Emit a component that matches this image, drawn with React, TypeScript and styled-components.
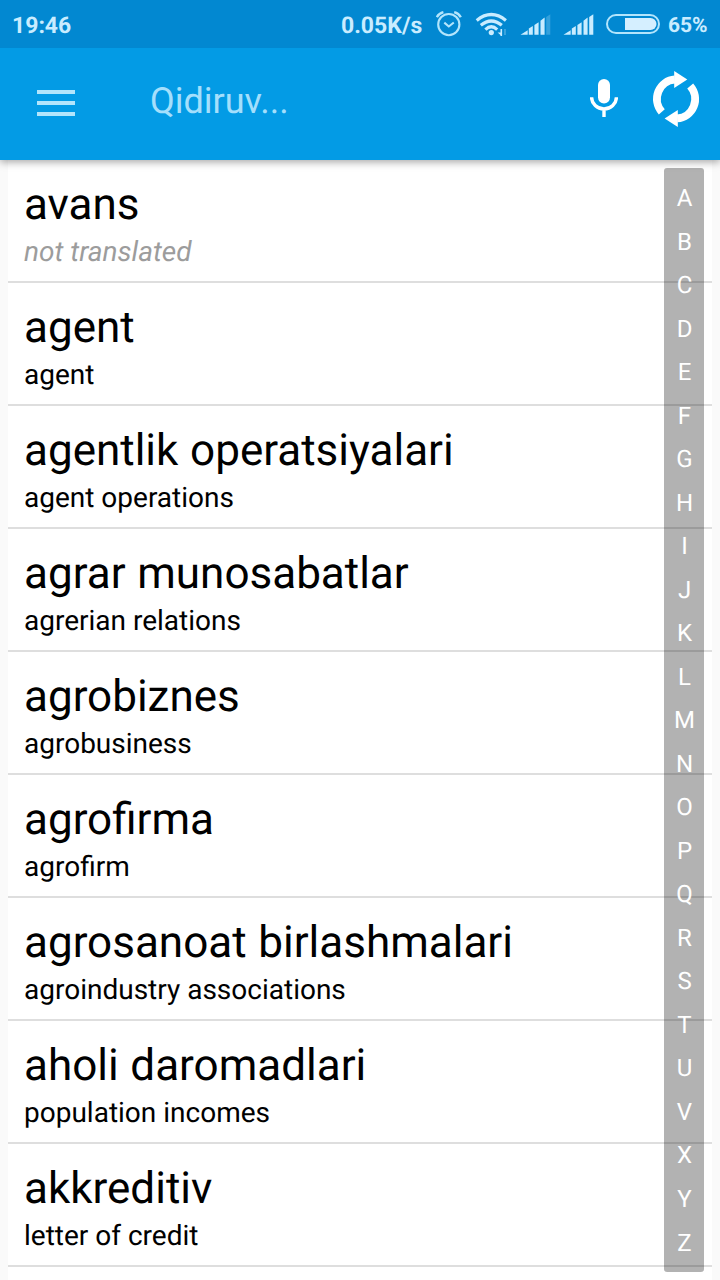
import React from "react";
import styled, { createGlobalStyle } from "styled-components";

const GlobalStyle = createGlobalStyle`
  * { box-sizing: border-box; }
  html, body { margin: 0; padding: 0; }
  body { background: #fafafa; font-family: Roboto, "Liberation Sans", sans-serif; overflow: hidden; text-rendering: geometricPrecision; }
`;

const Screen = styled.div`
  display: flex;
  flex-direction: column;
  width: 720px;
  height: 1280px;
  overflow: hidden;
`;

const StatusBar = styled.header`
  position: relative;
  z-index: 2;
  display: flex;
  align-items: center;
  height: 48px;
  flex: none;
  padding: 4px 12px 0 12px;
  background: #0288d1;
  color: #c9ecff;
`;

const StatusText = styled.span<{ $size?: number; $width?: number }>`
  font-size: ${(p) => p.$size ?? 23}px;
  line-height: 28px;
  font-weight: 700;
  white-space: nowrap;
  width: ${(p) => (p.$width ? `${p.$width}px` : "auto")};
`;

const StatusIcons = styled.div`
  display: flex;
  align-items: center;
  margin-left: auto;
`;

const StatusIcon = styled.svg<{ $gap: number }>`
  display: block;
  flex: none;
  margin: -4px ${(p) => p.$gap}px 0 0;
`;

const AppBar = styled.div`
  position: relative;
  z-index: 1;
  display: flex;
  align-items: center;
  height: 112px;
  flex: none;
  padding: 0 20px 0 37px;
  background: #039be5;
  box-shadow: 0 2px 8px rgba(0, 0, 0, 0.36);
`;

const MenuButton = styled.button`
  display: flex;
  flex-direction: column;
  gap: 7px;
  width: 38px;
  margin-top: -2px;
  padding: 0;
  border: 0;
  background: none;
`;

const MenuLine = styled.span`
  height: 4px;
  background: #b3e5fc;
`;

const SearchHint = styled.div`
  flex: 1;
  margin: -7px 0 0 75px;
  font-size: 36px;
  line-height: 42px;
  color: #a4dffc;
`;

const IconButton = styled.button<{ $gap?: number; $lift?: number }>`
  display: flex;
  padding: 0;
  margin: -${(p) => p.$lift ?? 10}px ${(p) => p.$gap ?? 0}px 0 0;
  border: 0;
  background: none;
`;

const Content = styled.main`
  position: relative;
  flex: 1;
  min-height: 0;
  padding: 0 8px;
`;

const WordList = styled.ul`
  margin: 0;
  padding: 0;
  height: 100%;
  overflow: hidden;
  list-style: none;
  background: #fff;
`;

const WordRow = styled.li`
  height: 123px;
  padding: 18px 16px 0;
  border-bottom: 2px solid #dedede;
`;

const Word = styled.div`
  font-size: 44px;
  line-height: 52px;
  word-spacing: 0.8px;
  color: #000;
`;

const Translation = styled.div<{ $missing?: boolean }>`
  margin-top: 5px;
  font-size: 28px;
  line-height: 33px;
  font-style: ${(p) => (p.$missing ? "italic" : "normal")};
  color: ${(p) => (p.$missing ? "#9c9c9c" : "#000")};
`;

const AlphabetIndex = styled.nav`
  position: absolute;
  top: 8px;
  right: 16px;
  bottom: 8px;
  width: 40px;
  display: flex;
  flex-direction: column;
  padding: 8.4px 0 7.6px 1px;
  border-radius: 3px;
  background: rgba(0, 0, 0, 0.3);
`;

const Letter = styled.span`
  flex: 1;
  display: flex;
  align-items: center;
  justify-content: center;
  font-size: 24px;
  line-height: 28px;
  color: #fff;
`;

const words = [
  { word: "avans", translation: "" },
  { word: "agent", translation: "agent" },
  { word: "agentlik operatsiyalari", translation: "agent operations" },
  { word: "agrar munosabatlar", translation: "agrerian relations" },
  { word: "agrobiznes", translation: "agrobusiness" },
  { word: "agrofirma", translation: "agrofirm" },
  { word: "agrosanoat birlashmalari", translation: "agroindustry associations" },
  { word: "aholi daromadlari", translation: "population incomes" },
  { word: "akkreditiv", translation: "letter of credit" },
];

const letters = "ABCDEFGHIJKLMNOPQRSTUVXYZ".split("");

const AlarmIcon = () => (
  <StatusIcon $gap={13} width="26" height="26" viewBox="0 0 26 26" fill="none" stroke="#b3e5fc" strokeWidth="2.1">
    <circle cx="12.8" cy="13.6" r="10.6" />
    <path d="M8.3 11.6l4.5 3.9 5-4" />
    <path d="M.8 6.2Q2.8 2.4 7.4 1.2M24.8 6.2Q22.8 2.4 18.2 1.2" strokeWidth="2.4" />
  </StatusIcon>
);

const WifiIcon = () => (
  <StatusIcon $gap={12} width="33" height="25" viewBox="0 0 33 25" fill="none" stroke="#c9ecff" strokeWidth="3.2">
    <path d="M1.7 8.4Q16.3 -3.4 30.9 8.4" />
    <path d="M5.8 13.3Q16.3 4.7 26.8 13.3" />
    <path d="M10.4 17.6Q16.3 12 22.2 17.6" />
    <circle cx="16.3" cy="20.6" r="2.6" fill="#c9ecff" stroke="none" />
    <path d="M26.3 17v7" strokeWidth="1.6" />
    <path d="M22.6 20.5h3.4v3z" fill="#c9ecff" stroke="none" />
    <path d="M30 17v6" strokeWidth="1.8" opacity=".3" />
  </StatusIcon>
);

const SignalIcon = ({ weak, gap }: { weak?: boolean; gap: number }) => (
  <StatusIcon $gap={gap} width="31" height="22" viewBox="0 0 31 22" fill="#c9ecff">
    <path d="M.5 21.7L7.7 17.2V21.7z" />
    <path d="M8.8 15.4L12.8 12.9V21.7H8.8z" />
    <path d="M14.4 11.9L18.6 9.2V21.7H14.4z" />
    <path d="M20.5 7.8L24.6 4.6V21.7H20.5z" />
    <path d="M26.2 4L30.3 1.2V21.7H26.2z" opacity={weak ? 0.25 : 1} />
  </StatusIcon>
);

const BatteryIcon = () => (
  <StatusIcon $gap={8} width="54" height="22" viewBox="0 0 54 22">
    <rect x="1" y="2" width="52" height="18" rx="9" fill="none" stroke="#b3e5fc" strokeWidth="2" />
    <path d="M19 5H44.5A6 6 0 0 1 44.5 17H19z" fill="#d5efff" />
  </StatusIcon>
);

export default function App() {
  return (
    <Screen>
      <GlobalStyle />
      <StatusBar>
        <StatusText>19:46</StatusText>
        <StatusIcons>
          <StatusText $width={95}>0.05K/s</StatusText>
          <AlarmIcon />
          <WifiIcon />
          <SignalIcon weak gap={12} />
          <SignalIcon gap={12} />
          <BatteryIcon />
          <StatusText $size={21} $width={40}>65%</StatusText>
        </StatusIcons>
      </StatusBar>
      <AppBar>
        <MenuButton aria-label="Menu">
          <MenuLine />
          <MenuLine />
          <MenuLine />
        </MenuButton>
        <SearchHint>Qidiruv...</SearchHint>
        <IconButton $gap={34} $lift={12} aria-label="Voice search">
          <svg width="28" height="38" viewBox="0 0 28 38">
            <rect x="8" y="0" width="12" height="24.5" rx="6" fill="#fff" />
            <path d="M1.6 18.2a12.4 11.8 0 0 0 24.8 0M14 30v8" fill="none" stroke="#fff" strokeWidth="3.4" />
          </svg>
        </IconButton>
        <IconButton aria-label="Refresh">
          <svg width="48" height="56" viewBox="0 0 48 56">
            <path d="M9.8 40.8A19 19.4 0 0 1 22.8 8.5" fill="none" stroke="#fff" strokeWidth="7.9" />
            <path d="M38.2 15A19 19.4 0 0 1 25.2 47.4" fill="none" stroke="#fff" strokeWidth="7.9" />
            <path d="M22.2 0L35.3 8.6L22.2 17z" fill="#fff" />
            <path d="M25.8 56L12.6 47.4L25.8 39z" fill="#fff" />
          </svg>
        </IconButton>
      </AppBar>
      <Content>
        <WordList>
          {words.map((w) => (
            <WordRow key={w.word}>
              <Word>{w.word}</Word>
              <Translation $missing={!w.translation}>{w.translation || "not translated"}</Translation>
            </WordRow>
          ))}
        </WordList>
        <AlphabetIndex>
          {letters.map((l) => (
            <Letter key={l}>{l}</Letter>
          ))}
        </AlphabetIndex>
      </Content>
    </Screen>
  );
}
